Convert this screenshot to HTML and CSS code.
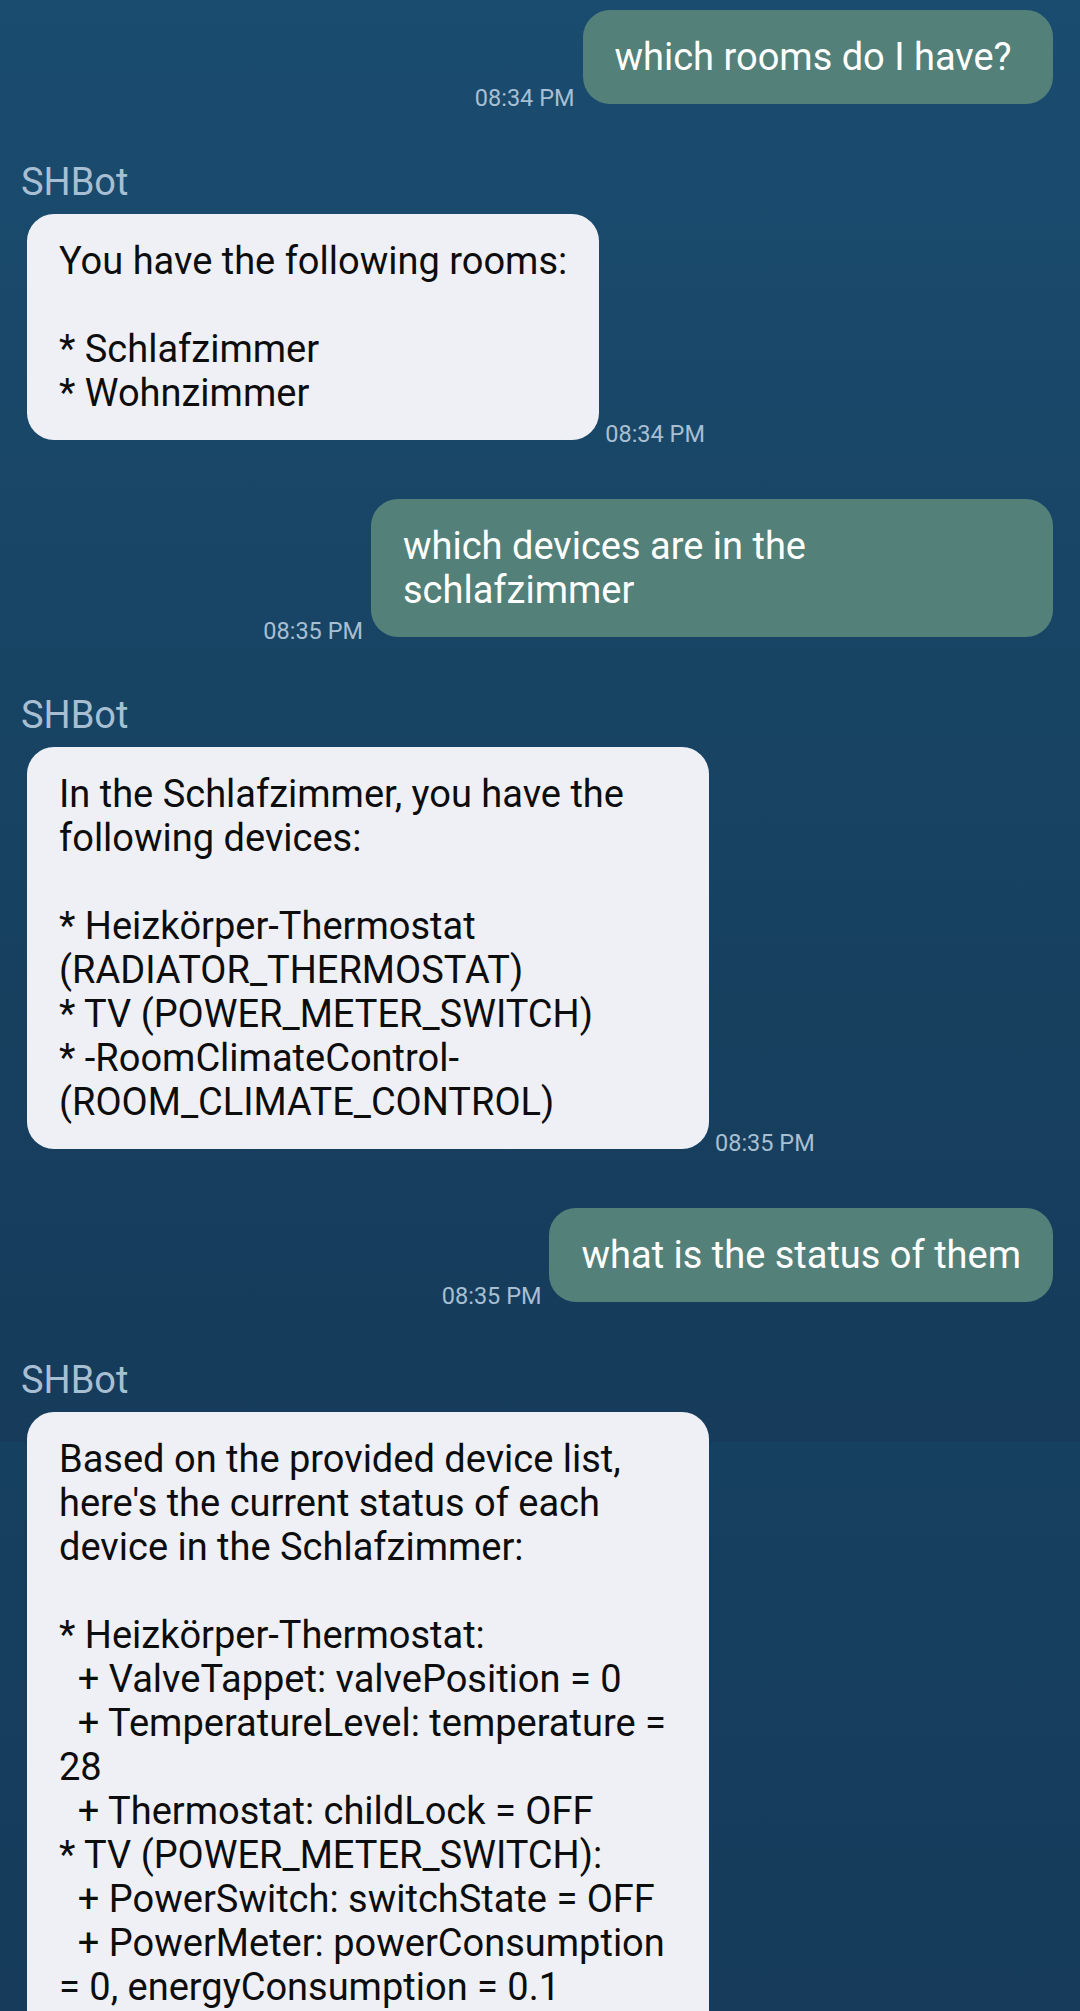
FILE: index.html
```html
<!DOCTYPE html>
<html lang="en">
<head>
<meta charset="utf-8">
<title>SHBot chat</title>
<link rel="stylesheet" href="styles.css">
</head>
<body>
<main class="chat">
  <div class="msg user">
    <span class="time">08:34 PM</span>
    <div class="bubble user-bubble">which rooms do I have?&nbsp;</div>
  </div>

  <div class="msg bot">
    <div class="name">SHBot</div>
    <div class="row">
      <div class="bubble bot-bubble">You have the following rooms:

* Schlafzimmer
* Wohnzimmer</div>
      <span class="time">08:34 PM</span>
    </div>
  </div>

  <div class="msg user">
    <span class="time">08:35 PM</span>
    <div class="bubble user-bubble">which devices are in the schlafzimmer</div>
  </div>

  <div class="msg bot">
    <div class="name">SHBot</div>
    <div class="row">
      <div class="bubble bot-bubble">In the Schlafzimmer, you have the following devices:

* Heizkörper-Thermostat (RADIATOR_THERMOSTAT)
* TV (POWER_METER_SWITCH)
* -RoomClimateControl- (ROOM_CLIMATE_CONTROL)</div>
      <span class="time">08:35 PM</span>
    </div>
  </div>

  <div class="msg user">
    <span class="time">08:35 PM</span>
    <div class="bubble user-bubble">what is the status of them</div>
  </div>

  <div class="msg bot">
    <div class="name">SHBot</div>
    <div class="row">
      <div class="bubble bot-bubble long">Based on the provided device list, here's the current status of each device in the Schlafzimmer:

* Heizkörper-Thermostat:
  + ValveTappet: valvePosition = 0
  + TemperatureLevel: temperature = 28
  + Thermostat: childLock = OFF
* TV (POWER_METER_SWITCH):
  + PowerSwitch: switchState = OFF
  + PowerMeter: powerConsumption = 0, energyConsumption = 0.1</div>
    </div>
  </div>
</main>
</body>
</html>
```

FILE: styles.css
```css
html, body {
  margin: 0;
  padding: 0;
}

body {
  width: 1080px;
  height: 2011px;
  overflow: hidden;
  font-family: Roboto, "Noto Sans", "Liberation Sans", sans-serif;
  background: linear-gradient(to bottom,
    #1a4c6f 0px,
    #17405f 1000px,
    #163b5b 1442px,
    #16405f 1442px,
    #163b5b 2011px);
}

.chat {
  display: flex;
  flex-direction: column;
  padding: 10px 27px 0 27px;
}

.msg {
  margin-top: 58px;
}

.msg:first-child {
  margin-top: 0;
}

.msg.user {
  display: flex;
  justify-content: flex-end;
  align-items: flex-end;
  gap: 8px;
}

.msg.bot + .msg.user {
  margin-top: 59px;
}

.msg.user + .msg.bot {
  margin-top: 56px;
}

.name {
  font-size: 38px;
  line-height: 44px;
  color: #a8bfd3;
  margin-left: -6px;
  margin-bottom: 10px;
}

.row {
  display: flex;
  align-items: flex-end;
  gap: 6px;
}

.bubble {
  box-sizing: border-box;
  max-width: 682px;
  padding: 25px 32px;
  border-radius: 27px;
  font-size: 38px;
  line-height: 44px;
  white-space: pre-wrap;
  overflow-wrap: break-word;
}

.user-bubble {
  background: #53817a;
  color: #ffffff;
}

.bot-bubble {
  background: #eef0f5;
  color: #0d0d0d;
}

.bot-bubble.long {
  width: 682px;
  padding-bottom: 80px;
}

.time {
  flex: none;
  font-size: 23.5px;
  line-height: 24px;
  color: #a8bfd2;
  margin-bottom: -6px;
}
```
